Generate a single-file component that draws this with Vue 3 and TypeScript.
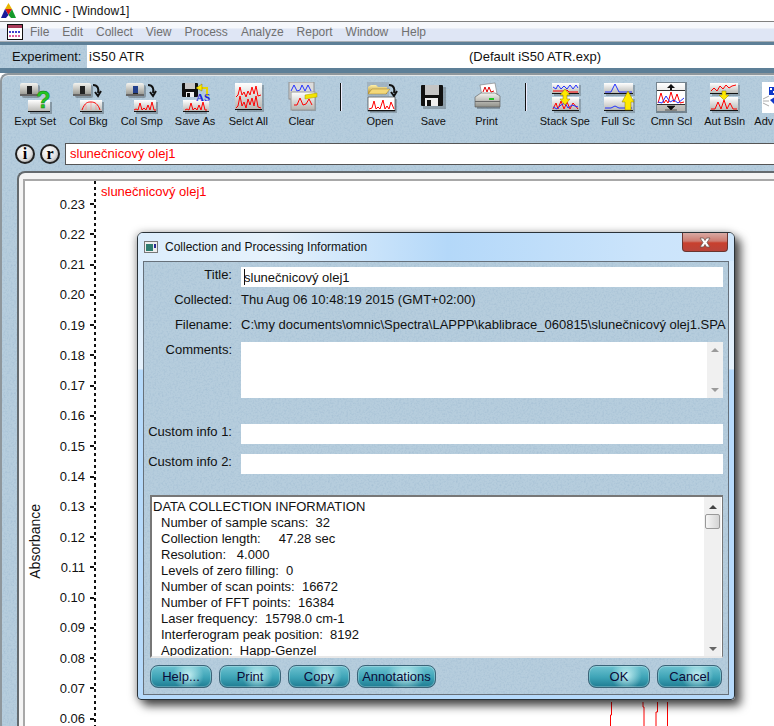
<script setup lang="ts">
interface Tool {
  label: string
  icon: string
  sep?: boolean
}

const tools: Tool[] = [
  { label: 'Expt Set', icon: 'expt' },
  { label: 'Col Bkg', icon: 'bkg' },
  { label: 'Col Smp', icon: 'smp' },
  { label: 'Save As', icon: 'saveas' },
  { label: 'Selct All', icon: 'selall' },
  { label: 'Clear', icon: 'clear', sep: true },
  { label: 'Open', icon: 'open' },
  { label: 'Save', icon: 'save' },
  { label: 'Print', icon: 'print', sep: true },
  { label: 'Stack Spe', icon: 'stack' },
  { label: 'Full Sc', icon: 'full' },
  { label: 'Cmn Scl', icon: 'cmn' },
  { label: 'Aut Bsln', icon: 'aut' },
]

const menus = ['File', 'Edit', 'Collect', 'View', 'Process', 'Analyze', 'Report', 'Window', 'Help']

const ticks: string[] = []
for (let v = 23; v >= 6; v--) ticks.push((v / 100).toFixed(2))

const info = [
  'Number of sample scans:  32',
  'Collection length:     47.28 sec',
  'Resolution:   4.000',
  'Levels of zero filling:  0',
  'Number of scan points:  16672',
  'Number of FFT points:  16384',
  'Laser frequency:  15798.0 cm-1',
  'Interferogram peak position:  8192',
  'Apodization:  Happ-Genzel',
]
</script>

<template>
  <div class="app">
    <svg class="defs" xmlns="http://www.w3.org/2000/svg">
      <defs>
        <linearGradient id="gbox" x1="0" y1="0" x2="0" y2="1">
          <stop offset="0" stop-color="#ffffff" />
          <stop offset="1" stop-color="#b4b4b0" />
        </linearGradient>
        <linearGradient id="gcomp" x1="0" y1="0" x2="0" y2="1">
          <stop offset="0" stop-color="#f4f4f0" />
          <stop offset="1" stop-color="#8f8f88" />
        </linearGradient>
        <linearGradient id="gfolder" x1="0" y1="0" x2="0" y2="1">
          <stop offset="0" stop-color="#fff0a8" />
          <stop offset="1" stop-color="#b08a28" />
        </linearGradient>
        <g id="comp">
          <rect x="2" y="2" width="18" height="13" rx="2" fill="#000" opacity=".25" />
          <rect x="0" y="0" width="18" height="13" rx="2" fill="url(#gcomp)" />
          <rect x="7" y="3" width="5" height="8" fill="#222" />
          <rect x="0" y="11" width="18" height="2" fill="#666" />
        </g>
        <g id="box">
          <rect x="2" y="2" width="22" height="12" fill="#000" opacity=".25" />
          <rect x="0" y="0" width="22" height="12" fill="url(#gbox)" />
          <rect x="0" y="11" width="22" height="1" fill="#111" />
        </g>
        <path id="turn" d="M1 1 C6 1 7 5 6 9 M3 8 L6 12 L9 7" fill="none" stroke="#111" stroke-width="2" />
        <path id="peaks" d="M1 10 L3 9 L5 10 L7 3 L9 10 L11 8 L13 10 L15 5 L17 10 L19 2 L21 10 L23 10" fill="none" stroke="#f00" stroke-width="1" />
        <g id="floppy">
          <rect x="0" y="0" width="16" height="14" rx="1" fill="#111" />
          <rect x="3" y="0" width="10" height="6" fill="#c8c8c8" />
          <rect x="4" y="9" width="8" height="5" fill="#eee" />
          <rect x="5" y="10" width="3" height="4" fill="#111" />
        </g>
        <symbol id="ic-expt" viewBox="0 0 36 32">
          <use href="#comp" x="3" y="1" />
          <use href="#box" x="11" y="18" />
          <text x="19" y="26" font-family="Liberation Sans" font-weight="700" font-size="24" fill="#22c622" stroke="#0b6b0b" stroke-width=".4">?</text>
        </symbol>
        <symbol id="ic-bkg" viewBox="0 0 36 32">
          <use href="#comp" x="3" y="1" />
          <use href="#turn" x="22" y="2" />
          <use href="#box" x="10" y="18" />
          <path d="M12 28 C15 20 18 20 21 20 C25 20 28 22 30 28" fill="none" stroke="#f00" />
          <path d="M16 23 V28 M21 21 V28 M26 23 V28" stroke="#f88" stroke-width=".6" />
        </symbol>
        <symbol id="ic-smp" viewBox="0 0 36 32">
          <use href="#comp" x="2" y="1" />
          <rect x="9" y="4" width="5" height="7" fill="#23408c" />
          <use href="#turn" x="23" y="2" />
          <use href="#box" x="10" y="18" />
          <use href="#peaks" x="9" y="18" />
        </symbol>
        <symbol id="ic-saveas" viewBox="0 0 36 32">
          <use href="#floppy" x="5" y="1" />
          <path d="M20 6 H30 V14" fill="none" stroke="#e8d400" stroke-width="2" />
          <path d="M25 2 L19 6 L25 9 Z" fill="#ffe900" stroke="#8a7a00" stroke-width=".5" />
          <use href="#box" x="6" y="18" />
          <rect x="6" y="18" width="26" height="12" fill="url(#gbox)" />
          <rect x="6" y="29" width="26" height="1" fill="#111" />
          <use href="#peaks" x="7" y="18" />
          <text x="19" y="19" font-family="Liberation Serif" font-weight="700" font-size="11" fill="#1c28d8">AS</text>
        </symbol>
        <symbol id="ic-selall" viewBox="0 0 36 32">
          <rect x="7" y="3" width="27" height="27" fill="#000" opacity=".22" />
          <rect x="5" y="1" width="27" height="27" fill="url(#gbox)" />
          <path d="M6 15 L8 13 L10 5 L12 13 L14 10 L16 15 L18 9 L20 13 L22 5 L24 12 L26 4 L28 14 L31 13 M6 26 L8 24 L10 14 L12 24 L14 20 L16 26 L18 17 L20 23 L22 16 L24 24 L26 14 L28 25 L31 26" fill="none" stroke="#f00" />
          <rect x="5" y="27" width="27" height="1" fill="#111" />
        </symbol>
        <symbol id="ic-clear" viewBox="0 0 36 32">
          <rect x="5" y="0" width="25" height="17" fill="#dcdcdc" stroke="#8e8e8e" />
          <path d="M7 9 L10 3 L13 9 L16 8 L18 3 L21 9 L24 3 L27 9" fill="none" stroke="#2433ff" />
          <rect x="8" y="11" width="24" height="18" fill="#000" opacity=".2" />
          <rect x="7" y="10" width="24" height="18" fill="url(#gbox)" stroke="#999" />
          <path d="M10 23 L13 23 L16 16 L19 23 L22 22 L25 17 L28 23" fill="none" stroke="#f00" />
          <path d="M21 13 L33 11 V15 L21 17 Z" fill="#f2e300" stroke="#a59a00" stroke-width=".5" />
        </symbol>
        <symbol id="ic-open" viewBox="0 0 36 32">
          <rect x="5" y="0" width="22" height="14" fill="#8c98a4" opacity=".45" />
          <path d="M6 5 L9 3 H14 L16 5 H25 V12 H6 Z" fill="url(#gfolder)" />
          <path d="M6 12 L10 7 H28 L24 12 Z" fill="#f4d878" stroke="#8a6a18" stroke-width=".4" />
          <use href="#turn" x="26" y="2" />
          <rect x="8" y="17" width="27" height="14" fill="#000" opacity=".2" />
          <rect x="6" y="15" width="27" height="14" fill="#fff" stroke="#222" stroke-width=".6" />
          <path d="M7 27 L10 26 L12 19 L14 27 L16 25 L18 27 L21 18 L23 27 L25 24 L27 27 L29 20 L32 27" fill="none" stroke="#f00" />
          <rect x="6" y="28" width="27" height="1" fill="#111" />
        </symbol>
        <symbol id="ic-save" viewBox="0 0 36 32">
          <rect x="8" y="5" width="23" height="22" fill="#000" opacity=".22" />
          <rect x="6" y="3" width="22" height="21" rx="1" fill="#111" />
          <rect x="10" y="3" width="14" height="10" fill="#c4c4c4" />
          <rect x="10" y="16" width="13" height="8" fill="#efefef" />
          <rect x="12" y="18" width="4" height="6" fill="#111" />
        </symbol>
        <symbol id="ic-print" viewBox="0 0 36 32">
          <path d="M11 3 L26 1 L28 12 L13 14 Z" fill="#fff" stroke="#777" stroke-width=".6" />
          <path d="M14 10 L16 5 L18 10 L20 5 L22 10 L25 9" fill="none" stroke="#d00" />
          <path d="M6 15 L12 11 H26 L31 14 V25 H6 Z" fill="url(#gcomp)" stroke="#555" stroke-width=".6" />
          <rect x="6" y="19" width="25" height="1" fill="#666" />
          <rect x="20" y="16" width="5" height="2" fill="#23c323" />
          <rect x="8" y="25" width="23" height="2" fill="#000" opacity=".25" />
        </symbol>
        <symbol id="ic-stack" viewBox="0 0 36 32">
          <rect x="7" y="3" width="27" height="11" fill="#000" opacity=".2" />
          <rect x="5" y="1" width="27" height="11" fill="url(#gbox)" />
          <path d="M6 5 L9 7 L11 3 L14 7 L17 4 L20 7 L23 3 L26 7 L29 3 L31 6" fill="none" stroke="#2433ff" />
          <path d="M6 9 H18 L20 8 L22 10 H31" fill="none" stroke="#f00" />
          <rect x="5" y="11" width="27" height="1" fill="#111" />
          <rect x="7" y="17" width="27" height="14" fill="#000" opacity=".2" />
          <rect x="5" y="15" width="27" height="14" fill="url(#gbox)" />
          <path d="M6 27 L9 21 L11 27 L14 19 L17 27 L20 20 L23 27 L26 21 L31 27" fill="none" stroke="#f00" />
          <path d="M6 25 L10 27 L14 23 L18 21 L21 26 L25 23 L31 25" fill="none" stroke="#2433ff" />
          <rect x="5" y="28" width="27" height="1" fill="#111" />
          <path d="M18 7 L23 13 H20 V17 H23 L18 23 L13 17 H16 V13 H13 Z" fill="#ffe900" stroke="#8a7a00" stroke-width=".5" />
        </symbol>
        <symbol id="ic-full" viewBox="0 0 36 32">
          <rect x="6" y="3" width="29" height="11" fill="#000" opacity=".2" />
          <rect x="4" y="1" width="29" height="11" fill="url(#gbox)" />
          <path d="M5 10 H11 L15 2 L19 10 H32" fill="none" stroke="#2433ff" />
          <rect x="4" y="11" width="29" height="1" fill="#111" />
          <rect x="6" y="17" width="29" height="14" fill="#000" opacity=".2" />
          <rect x="4" y="15" width="29" height="14" fill="url(#gbox)" />
          <path d="M5 26 H11 L15 24 L19 26 H32" fill="none" stroke="#2433ff" />
          <rect x="4" y="28" width="29" height="1" fill="#111" />
          <path d="M28 9 L34 20 H31 V28 H25 V20 H22 Z" fill="#ffe900" stroke="#8a7a00" stroke-width=".5" />
        </symbol>
        <symbol id="ic-cmn" viewBox="0 0 36 32">
          <rect x="3" y="0" width="31" height="31" fill="#000" opacity=".35" />
          <rect x="4" y="1" width="28" height="28" fill="url(#gbox)" />
          <path d="M18 2 L22 6 H19 V8 H17 V6 H14 Z" fill="#111" />
          <rect x="4" y="8" width="28" height="1" fill="#333" />
          <rect x="4" y="9" width="28" height="13" fill="#fff" />
          <path d="M5 21 L8 11 L11 21 L13 18 L15 21 L18 10 L21 20 L24 12 L27 21 L31 20" fill="none" stroke="#f00" />
          <path d="M5 20 L9 21 L13 14 L17 20 L21 18 L25 21 L31 16" fill="none" stroke="#2433ff" />
          <rect x="4" y="22" width="28" height="1" fill="#333" />
          <path d="M18 28 L14 24 H22 Z M12 28 H24" fill="#111" stroke="#111" stroke-width=".6" />
        </symbol>
        <symbol id="ic-aut" viewBox="0 0 36 32">
          <rect x="5" y="3" width="28" height="11" fill="#000" opacity=".2" />
          <rect x="3" y="1" width="28" height="11" fill="url(#gbox)" />
          <path d="M4 9 L7 6 L10 9 L13 4 L16 7 L19 3 L22 6 L25 4 L29 3" fill="none" stroke="#f00" />
          <rect x="3" y="11" width="28" height="1" fill="#111" />
          <rect x="5" y="17" width="28" height="14" fill="#000" opacity=".2" />
          <rect x="3" y="15" width="28" height="14" fill="url(#gbox)" />
          <path d="M4 27 L8 27 L11 20 L14 27 L17 18 L20 27 L23 21 L26 27 L30 27" fill="none" stroke="#f00" />
          <rect x="3" y="28" width="28" height="1" fill="#111" />
          <path d="M17 18 L22 13 H19 V9 H15 V13 H12 Z" fill="#ffe900" stroke="#8a7a00" stroke-width=".5" />
        </symbol>
      </defs>
    </svg>

    <div class="titlebar">
      <svg class="logo" width="15" height="15" viewBox="0 0 15 15">
        <path d="M7.5 0 L11 6 H4 Z" fill="#e8b400" />
        <path d="M4 6 H11 L7.5 12 Z" fill="#d81818" />
        <path d="M4 6 L7.5 12 L5 15 H0 Z" fill="#1a1a9a" />
        <path d="M11 6 L15 15 H10 L7.5 12 Z" fill="#159a2a" />
      </svg>
      <span>OMNIC - [Window1]</span>
    </div>

    <div class="menubar">
      <svg class="menu-icon" width="16" height="16" viewBox="0 0 16 16">
        <rect x=".5" y=".5" width="15" height="15" fill="#fff" stroke="#111" />
        <rect x="1" y="1" width="14" height="3" fill="#a83a5a" />
        <path d="M2 8 H14" stroke="#4040d0" stroke-width="2" stroke-dasharray="2 1" />
        <path d="M2 12 H14" stroke="#e060a0" stroke-width="2" stroke-dasharray="2 1" />
      </svg>
      <span v-for="m in menus" :key="m" class="menu-item">{{ m }}</span>
    </div>

    <div class="experiment">
      <span class="exp-label">Experiment:</span>
      <div class="exp-input">
        <span class="exp-name">iS50 ATR</span>
        <span>(Default iS50 ATR.exp)</span>
      </div>
    </div>

    <div class="workspace">
      <div class="tools">
        <template v-for="t in tools" :key="t.label">
          <div class="tool">
            <svg class="tool-icon" width="36" height="32"><use :href="'#ic-' + t.icon" /></svg>
            <span>{{ t.label }}</span>
          </div>
          <div v-if="t.sep" class="tool-sep"></div>
        </template>
        <div class="tool">
          <svg class="tool-icon" width="36" height="32" viewBox="0 0 36 32">
            <rect x="2" y="0" width="34" height="31" fill="#fff" />
            <path d="M9 5 H16 V13 H9 Z" fill="#1038c8" />
            <path d="M10 6 H12 V8 H10 Z M13 9 H15 V11 H13 Z" fill="#fff" />
            <path d="M3 17 L9 14 M3 19 L9 19 M3 21 L9 24" stroke="#aaa" />
            <path d="M10 18 L15 15 V23 Z" fill="#1038c8" />
          </svg>
          <span class="adv-label">Adv</span>
        </div>
      </div>

      <div class="title-row">
        <div class="round-btn">i</div>
        <div class="round-btn">r</div>
        <div class="title-input">slunečnicový olej1</div>
      </div>

      <div class="specwin">
        <div class="plot">
          <div class="ylabel-col"><span class="ylabel">Absorbance</span></div>
          <div class="scale">
            <div v-for="t in ticks" :key="t" class="scale-row">
              <span>{{ t }}</span>
              <i class="tick"></i>
            </div>
          </div>
          <div class="axis"></div>
          <div class="spec-name">slunečnicový olej1</div>
        </div>
      </div>
    </div>

    <svg class="trace" width="774" height="726" viewBox="0 0 774 726">
      <path d="M611.5 702 V715 H610.5 V726 M643 702 V707 H644 V726 M657.5 702 V712 H656 V726 M667.5 702 V726" fill="none" stroke="#f00" />
    </svg>

    <div class="dialog">
      <div class="dlg-title">
        <svg width="14" height="12" viewBox="0 0 14 12">
          <rect x=".5" y=".5" width="13" height="11" fill="#eee" stroke="#777" />
          <rect x="2" y="3" width="7" height="7" fill="#2f7d6f" />
          <rect x="10" y="3" width="2" height="4" fill="#2a2a90" />
        </svg>
        <span>Collection and Processing Information</span>
        <div class="close">
          <svg width="16" height="11" viewBox="0 0 16 11">
            <path d="M3 1 H6.5 L8 3.5 L9.5 1 H13 L10 5.5 L13 10 H9.5 L8 7.5 L6.5 10 H3 L6 5.5 Z" fill="#fff" stroke="#6b5550" stroke-width=".8" />
          </svg>
        </div>
      </div>

      <div class="panel">
        <div class="field first">
          <label>Title:</label>
          <div class="input"><i class="caret"></i>slunečnicový olej1</div>
        </div>
        <div class="field gap5">
          <label>Collected:</label>
          <div class="plain">Thu Aug 06 10:48:19 2015 (GMT+02:00)</div>
        </div>
        <div class="field gap9">
          <label>Filename:</label>
          <div class="plain filename">C:\my documents\omnic\Spectra\LAPPP\kablibrace_060815\slunečnicový olej1.SPA</div>
        </div>
        <div class="field gap9">
          <label>Comments:</label>
          <div class="comments">
            <div class="mini-scroll">
              <span class="arrow up"></span>
              <span class="arrow down"></span>
            </div>
          </div>
        </div>
        <div class="field gap26">
          <label>Custom info 1:</label>
          <div class="input"></div>
        </div>
        <div class="field gap10">
          <label>Custom info 2:</label>
          <div class="input"></div>
        </div>

        <div class="log">
          <div class="log-text">
            <div>DATA COLLECTION INFORMATION</div>
            <div v-for="line in info" :key="line" class="log-line">{{ line }}</div>
          </div>
          <div class="log-scroll">
            <span class="arrow up dark"></span>
            <span class="thumb"></span>
            <span class="arrow down dark"></span>
          </div>
        </div>

        <div class="buttons">
          <button class="w62">Help...</button>
          <button class="w62">Print</button>
          <button class="w62">Copy</button>
          <button class="w79">Annotations</button>
          <span class="spacer"></span>
          <button class="w62">OK</button>
          <button class="w65">Cancel</button>
        </div>
      </div>
    </div>
  </div>
</template>

<style>
html,
body {
  margin: 0;
  background: #fff;
}
</style>

<style scoped>
.app {
  --tex: url("data:image/svg+xml,%3Csvg xmlns='http://www.w3.org/2000/svg' width='128' height='128'%3E%3Cfilter id='n'%3E%3CfeTurbulence type='fractalNoise' baseFrequency='.55' numOctaves='2' stitchTiles='stitch'/%3E%3CfeColorMatrix values='0 0 0 0 .3 0 0 0 0 .45 0 0 0 0 .6 0 0 0 .9 -.38'/%3E%3C/filter%3E%3Crect width='128' height='128' filter='url(%23n)'/%3E%3C/svg%3E");
  position: relative;
  width: 774px;
  height: 726px;
  overflow: hidden;
  display: flex;
  flex-direction: column;
  font-family: "Liberation Sans", Arial, sans-serif;
  font-size: 13px;
  color: #111;
  background: #fff;
}

.defs {
  display: block;
  width: 0;
  height: 0;
  flex: none;
}

.titlebar {
  height: 21px;
  flex: none;
  display: flex;
  align-items: center;
  padding-left: 1px;
  gap: 5px;
  font-size: 12px;
  letter-spacing: 0.1px;
  box-sizing: border-box;
}

.menubar {
  height: 21px;
  flex: none;
  box-sizing: border-box;
  display: flex;
  align-items: center;
  gap: 13px;
  padding-left: 7px;
  border-top: 1px solid #808080;
  border-bottom: 1px solid #a8aeb4;
  background: linear-gradient(180deg, #f6f8fc 0, #f6f8fc 30%, #dfe6f5 38%, #dfe6f5 100%);
  color: #707070;
  font-size: 12px;
}

.menu-icon {
  margin-right: -6px;
}

.experiment {
  height: 31px;
  flex: none;
  box-sizing: border-box;
  display: flex;
  align-items: center;
  border-top: 3px solid #5d7f97;
  border-bottom: 5px solid #5d7f97;
  background: #b6cddd var(--tex);
}

.exp-label {
  width: 87px;
  padding-left: 12px;
  box-sizing: border-box;
}

.exp-input {
  flex: 1;
  height: 23px;
  background: #fff;
  display: flex;
  align-items: center;
  padding-left: 2px;
}

.exp-name {
  width: 380px;
  letter-spacing: 0.2px;
}

.workspace {
  flex: 1;
  min-height: 0;
  display: flex;
  flex-direction: column;
  box-sizing: border-box;
  border-top: 2px solid #8f979c;
  border-left: 2px solid #8f979c;
  border-top-left-radius: 8px;
  background: #b6cddd var(--tex);
  box-shadow: inset 0 1px 0 #e4e8ea;
}

.tools {
  height: 68px;
  flex: none;
  display: flex;
  padding: 7px 0 0 6.5px;
  box-sizing: border-box;
}

.tool {
  width: 53.3px;
  flex: none;
  display: flex;
  flex-direction: column;
  align-items: center;
  font-size: 11px;
  line-height: 14px;
  white-space: nowrap;
}

.tool-icon {
  display: block;
  flex: none;
}

.adv-label {
  align-self: flex-start;
  margin-left: 3px;
}

.tool-sep {
  width: 25px;
  height: 28px;
  margin-top: 1px;
  flex: none;
  background: linear-gradient(90deg, transparent 12px, #111 12px, #111 13px, #eef 13px, #eef 14px, transparent 14px);
}

.title-row {
  height: 22px;
  flex: none;
  display: flex;
  align-items: center;
  padding-left: 13px;
  gap: 5px;
}

.round-btn {
  width: 20px;
  height: 20px;
  box-sizing: border-box;
  border-radius: 50%;
  border: 2px solid #222;
  background: radial-gradient(circle at 40% 35%, #fff 0, #e2e2e2 55%, #8c8c8c 100%);
  font-family: "Liberation Serif", serif;
  font-weight: 700;
  font-size: 16px;
  line-height: 15px;
  text-align: center;
  color: #000;
}

.title-input {
  flex: 1;
  height: 22px;
  box-sizing: border-box;
  border-top: 1px solid #555;
  border-bottom: 1px solid #555;
  border-left: 1px solid #555;
  background: #fff;
  color: #f00;
  line-height: 20px;
  padding-left: 4px;
}

.specwin {
  flex: 1;
  min-height: 0;
  margin: 6px 0 0 15px;
  box-sizing: border-box;
  border-top: 2px solid #646a6e;
  border-left: 2px solid #646a6e;
  border-top-left-radius: 8px;
  background: #f4f4f4;
  padding: 6px 0 0 4px;
  display: flex;
}

.plot {
  flex: 1;
  display: flex;
  background: #fff;
  border-top: 2px solid #a8a8a8;
  border-left: 2px solid #a8a8a8;
}

.ylabel-col {
  width: 20px;
  flex: none;
  padding-top: 323px;
}

.ylabel {
  display: block;
  writing-mode: vertical-rl;
  transform: rotate(180deg);
  font-size: 14px;
  line-height: 20px;
}

.scale {
  width: 49px;
  flex: none;
  padding-top: 8px;
}

.scale-row {
  height: 30.27px;
  display: flex;
  align-items: center;
  justify-content: flex-end;
}

.scale-row span {
  margin-right: 5px;
}

.tick {
  width: 4px;
  height: 2px;
  background: #111;
}

.axis {
  width: 2px;
  flex: none;
  background: repeating-linear-gradient(180deg, #111 0, #111 3px, transparent 3px, transparent 6.05px);
}

.spec-name {
  color: #f00;
  padding: 3px 0 0 5px;
  line-height: 16px;
}

.trace {
  position: absolute;
  left: 0;
  top: 0;
}

.dialog {
  position: absolute;
  left: 137px;
  top: 232px;
  width: 598px;
  height: 468px;
  box-sizing: border-box;
  display: flex;
  flex-direction: column;
  border: 1px solid #2a3238;
  border-radius: 6px 6px 4px 4px;
  background: linear-gradient(180deg, #d3e9fc 0, #e6f2fd 136px, #b6dafb 137px, #b6dafb 100%);
  box-shadow: 6px 6px 10px rgba(0, 0, 0, 0.65), -1px 1px 8px rgba(0, 0, 0, 0.35);
  padding: 0 5px 4px;
}

.dlg-title {
  height: 28px;
  flex: none;
  display: flex;
  align-items: center;
  gap: 7px;
  margin: 0 -5px;
  padding: 0 0 0 6px;
  border-radius: 5px 5px 0 0;
  background: linear-gradient(90deg, #dcedfc 0, #e6f2fc 22%, #b4d8f9 52%, #cbe4fb 85%, #cfe6fb 100%);
  font-size: 12px;
}

.close {
  position: absolute;
  right: 6px;
  top: 0;
  width: 46px;
  height: 19px;
  box-sizing: border-box;
  border: 1px solid #6a3530;
  border-top: 0;
  border-radius: 0 0 4px 4px;
  background: linear-gradient(180deg, #d8aaa4 0, #cd7b70 45%, #c8402e 55%, #b8443a 100%);
  display: flex;
  align-items: center;
  justify-content: center;
}

.panel {
  flex: 1;
  min-height: 0;
  display: flex;
  flex-direction: column;
  border: 1px solid #66707a;
  background: #b6cddd var(--tex);
  padding: 5px 5px 0 0;
}

.field {
  display: grid;
  grid-template-columns: 88px minmax(0, 1fr);
  column-gap: 9px;
  min-width: 0;
}

.gap5 {
  margin-top: 5px;
}

.gap9 {
  margin-top: 9px;
}

.gap10 {
  margin-top: 10px;
}

.gap26 {
  margin-top: 26px;
}

.field label {
  text-align: right;
  line-height: 16px;
  white-space: nowrap;
}

.input {
  height: 20px;
  background: #fff;
  display: flex;
  align-items: center;
  padding-left: 3px;
  box-sizing: border-box;
}

.caret {
  width: 1px;
  height: 16px;
  background: #111;
  margin-right: -1px;
}

.plain {
  line-height: 16px;
  white-space: nowrap;
  min-width: 0;
}

.filename {
  margin-right: -5px;
  overflow: hidden;
}

.comments {
  height: 56px;
  background: #fff;
  display: flex;
  justify-content: flex-end;
}

.mini-scroll {
  width: 16px;
  background: #f0f0f0;
  display: flex;
  flex-direction: column;
  justify-content: space-between;
  align-items: center;
  padding: 6px 0;
  box-sizing: border-box;
}

.arrow {
  width: 0;
  height: 0;
  border-left: 4px solid transparent;
  border-right: 4px solid transparent;
}

.arrow.up {
  border-bottom: 4px solid #9a9a9a;
}

.arrow.down {
  border-top: 4px solid #9a9a9a;
}

.arrow.up.dark {
  border-bottom-color: #444;
}

.arrow.down.dark {
  border-top-color: #666;
}

.log {
  height: 163px;
  flex: none;
  margin: 21px 0 0 6px;
  box-sizing: border-box;
  border: 2px solid #777;
  border-right-width: 1px;
  border-bottom-color: #e8e8e8;
  background: #fff;
  display: flex;
  overflow: hidden;
}

.log-text {
  flex: 1;
  padding: 2px 0 0 1px;
  line-height: 16px;
  white-space: pre;
  overflow: hidden;
}

.log-line {
  padding-left: 8px;
}

.log-scroll {
  width: 17px;
  margin-right: 1px;
  flex: none;
  background: #f0f0f0;
  display: flex;
  flex-direction: column;
  align-items: center;
  padding: 8px 0 5px;
  box-sizing: border-box;
}

.thumb {
  width: 15px;
  height: 15px;
  box-sizing: border-box;
  margin-top: 5px;
  margin-bottom: auto;
  border: 1px solid #999;
  border-radius: 2px;
  background: linear-gradient(90deg, #f6f6f6, #d4d4d4);
}

.buttons {
  display: flex;
  gap: 7px;
  margin: 7px 1px 0 6px;
  height: 23px;
}

.spacer {
  flex: 1;
}

button {
  height: 23px;
  padding: 0;
  box-sizing: border-box;
  border: 1px solid #3b6478;
  border-radius: 8px;
  font-family: inherit;
  font-size: 13px;
  color: #0b0b38;
  background:
    radial-gradient(ellipse 26% 70% at 62% 45%, rgba(220, 252, 252, 0.85), transparent),
    linear-gradient(180deg, #6cc2d0 0, #3da3b6 55%, #1f7c92 100%);
  box-shadow: inset 0 0 0 1px rgba(255, 255, 255, 0.25);
}

.w62 {
  width: 62px;
}

.w65 {
  width: 65px;
}

.w79 {
  width: 79px;
}
</style>
